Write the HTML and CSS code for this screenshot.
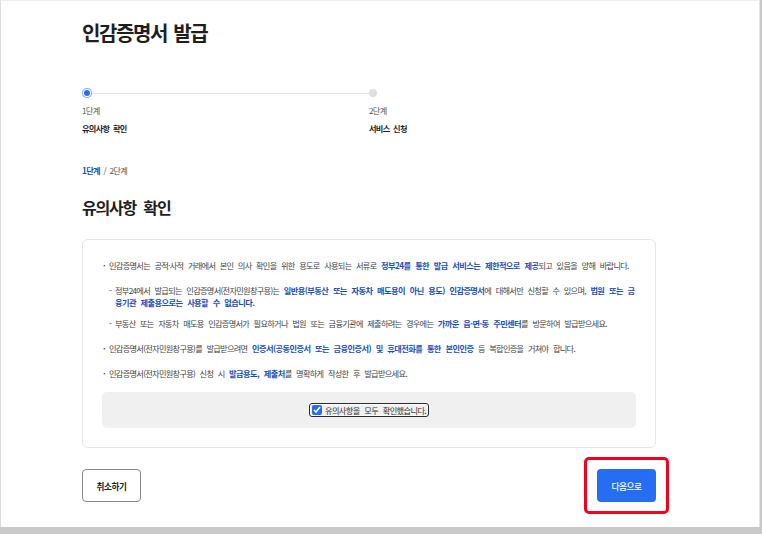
FILE: index.html
```html
<!DOCTYPE html>
<html lang="ko">
<head>
    <meta charset="UTF-8">
    <meta name="viewport" content="width=device-width, initial-scale=1.0">
    <title>인감증명서 발급</title>
    <link rel="stylesheet" href="styles.css">
</head>
<body>
    <div class="page">
        <h1 class="page-title">인감증명서 발급</h1>

        <!-- Step indicator -->
        <div class="stepper">
            <div class="step">
                <div class="step-head">
                    <span class="dot dot-active"></span>
                    <span class="step-line"></span>
                </div>
                <div class="step-num">1단계</div>
                <div class="step-name">유의사항 확인</div>
            </div>
            <div class="step">
                <div class="step-head">
                    <span class="dot"></span>
                </div>
                <div class="step-num">2단계</div>
                <div class="step-name">서비스 신청</div>
            </div>
        </div>

        <div class="step-count"><strong>1단계</strong> / 2단계</div>

        <h2 class="section-title">유의사항 확인</h2>

        <div class="notice-box">
            <ul class="notice-list">
                <li>
                    인감증명서는 공적·사적 거래에서 본인 의사 확인을 위한 용도로 사용되는 서류로 <b>정부24를 통한 발급 서비스는 제한적으로 제공</b>되고 있음을 양해 바랍니다.
                    <ul class="sub-list">
                        <li>정부24에서 발급되는 인감증명서(전자민원창구용)는 <b>일반용(부동산 또는 자동차 매도용이 아닌 용도) 인감증명서</b>에 대해서만 신청할 수 있으며, <b>법원 또는 금융기관 제출용으로는 사용할 수 없습니다.</b></li>
                        <li>부동산 또는 자동차 매도용 인감증명서가 필요하거나 법원 또는 금융기관에 제출하려는 경우에는 <b>가까운 읍·면·동 주민센터</b>를 방문하여 발급받으세요.</li>
                    </ul>
                </li>
                <li>인감증명서(전자민원창구용)를 발급받으려면 <b>인증서(공동인증서 또는 금융인증서) 및 휴대전화를 통한 본인인증</b> 등 복합인증을 거쳐야 합니다.</li>
                <li>인감증명서(전자민원창구용) 신청 시 <b>발급용도, 제출처</b>를 명확하게 작성한 후 발급받으세요.</li>
            </ul>

            <div class="agree-box">
                <label class="agree-check">
                    <input type="checkbox" checked>
                    <span>유의사항을 모두 확인했습니다.</span>
                </label>
            </div>
        </div>

        <div class="button-row">
            <button type="button" class="btn btn-line">취소하기</button>
            <button type="button" class="btn btn-primary">다음으로</button>
        </div>
    </div>
</body>
</html>
```

FILE: styles.css
```css
body {
    margin: 0;
    background-color: #c9c9c9;
    font-family: "Noto Sans CJK KR", sans-serif;
    color: #333;
}
.page {
    width: 760px;
    height: 527px;
    box-sizing: border-box;
    background-color: #fff;
    border-left: 1px solid #dcdcdc;
    border-right: 1px solid #e4e4e4;
    border-top: 1px solid #efefef;
    padding: 20px 103px 0 81px;
}
.page-title {
    margin: 0;
    font-size: 20px;
    line-height: 24px;
    letter-spacing: -1.4px;
    word-spacing: 2px;
    font-weight: 700;
    color: #1e1e1e;
}

/* step indicator */
.stepper {
    display: flex;
    margin-top: 43px;
}
.step {
    flex: 1;
}
.step-head {
    display: flex;
    align-items: center;
    height: 10px;
}
.dot {
    width: 8px;
    height: 8px;
    border-radius: 50%;
    background-color: #dedede;
    flex-shrink: 0;
}
.dot-active {
    width: 10px;
    height: 10px;
    background-color: #256ef4;
    box-shadow: inset 0 0 0 1px #8eb0f2, inset 0 0 0 2px #fff;
}
.step-line {
    flex: 1;
    height: 1px;
    background-color: #e3e3e3;
}
.step-num,
.step-name,
.step-count {
    font-size: 8.2px;
    line-height: 12px;
    letter-spacing: -0.7px;
    word-spacing: 2px;
}
.step-num {
    margin-top: 6px;
    color: #555;
}
.step-name {
    margin-top: 6px;
    font-weight: 700;
    color: #1e1e1e;
}
.step-count {
    margin-top: 30px;
    color: #555;
}
.step-count strong {
    color: #1a4fba;
}
.section-title {
    margin: 20px 0 0;
    font-size: 16px;
    line-height: 22px;
    letter-spacing: -1.2px;
    word-spacing: 4px;
    font-weight: 700;
    color: #1e1e1e;
}

/* notice */
.notice-box {
    margin-top: 21px;
    border: 1px solid #e6e6e6;
    border-radius: 6px;
    padding: 19px;
}
.notice-list,
.sub-list {
    list-style: none;
    margin: 0;
    padding: 0;
}
.notice-list {
    font-size: 8.2px;
    line-height: 12px;
    letter-spacing: -0.7px;
    word-spacing: 2.9px;
    color: #444;
}
.notice-list > li {
    position: relative;
    padding-left: 7px;
    margin-top: 13px;
}
.notice-list > li:first-child {
    margin-top: 0;
}
.notice-list > li::before {
    content: "·";
    position: absolute;
    left: 1px;
    top: 0;
    font-weight: 700;
}
.sub-list {
    margin-top: 13px;
}
.sub-list li {
    position: relative;
    padding-left: 6px;
    margin-top: 9px;
}
.sub-list li:first-child {
    margin-top: 0;
}
.sub-list li::before {
    content: "-";
    position: absolute;
    left: 0;
    top: 0;
}
.notice-list b {
    color: #1a4fba;
    font-weight: 700;
    letter-spacing: -0.55px;
}
.agree-box {
    margin-top: 13px;
    height: 36px;
    display: flex;
    align-items: center;
    justify-content: center;
    background-color: #f0f0f0;
    border-radius: 5px;
}
.agree-check {
    display: flex;
    align-items: center;
    gap: 3px;
    padding: 1px 2px;
    border: 1px solid #2b2b2b;
    border-radius: 3px;
    box-shadow: inset 0 0 0 1px #fff;
    font-size: 8.2px;
    line-height: 10px;
    letter-spacing: -0.6px;
    word-spacing: 2.9px;
    color: #333;
}
.agree-check input {
    width: 10px;
    height: 10px;
    margin: 0;
    accent-color: #256ef4;
}

/* buttons */
.button-row {
    display: flex;
    justify-content: space-between;
    margin-top: 21px;
}
.btn {
    position: relative;
    width: 59px;
    height: 33px;
    border-radius: 4px;
    font-family: inherit;
    font-size: 8.6px;
    letter-spacing: -0.4px;
    font-weight: 700;
    cursor: pointer;
}
.btn-line {
    background-color: #fff;
    border: 1px solid #8a8a8a;
    color: #222;
}
.btn-primary {
    background-color: #256ef4;
    border: none;
    color: #fff;
    font-weight: 500;
}
/* highlight frame around the next button */
.btn-primary::after {
    content: "";
    position: absolute;
    top: -12px;
    right: -13px;
    bottom: -12px;
    left: -13px;
    border: 3px solid #f2001d;
    border-radius: 5px;
}
```
